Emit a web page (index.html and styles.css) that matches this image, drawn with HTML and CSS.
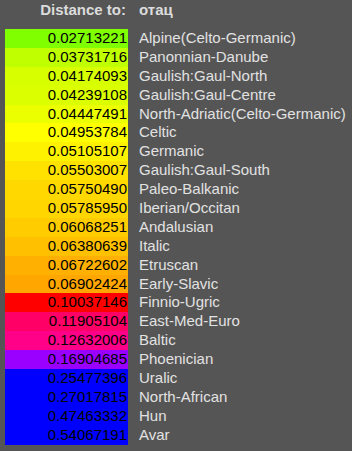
FILE: index.html
```html
<!DOCTYPE html>
<html>
<head>
<meta charset="utf-8">
<link rel="stylesheet" href="styles.css">
</head>
<body>
<div class="panel">
  <div class="head">
    <div class="head-key">Distance to:</div>
    <div class="head-name">отац</div>
  </div>
  <div class="rows">
    <div class="row"><div class="val c1">0.02713221</div><div class="name">Alpine(Celto-Germanic)</div></div>
    <div class="row"><div class="val c2">0.03731716</div><div class="name">Panonnian-Danube</div></div>
    <div class="row"><div class="val c3">0.04174093</div><div class="name">Gaulish:Gaul-North</div></div>
    <div class="row"><div class="val c4">0.04239108</div><div class="name">Gaulish:Gaul-Centre</div></div>
    <div class="row"><div class="val c5">0.04447491</div><div class="name">North-Adriatic(Celto-Germanic)</div></div>
    <div class="row"><div class="val c6">0.04953784</div><div class="name">Celtic</div></div>
    <div class="row"><div class="val c7">0.05105107</div><div class="name">Germanic</div></div>
    <div class="row"><div class="val c8">0.05503007</div><div class="name">Gaulish:Gaul-South</div></div>
    <div class="row"><div class="val c9">0.05750490</div><div class="name">Paleo-Balkanic</div></div>
    <div class="row"><div class="val c10">0.05785950</div><div class="name">Iberian/Occitan</div></div>
    <div class="row"><div class="val c11">0.06068251</div><div class="name">Andalusian</div></div>
    <div class="row"><div class="val c12">0.06380639</div><div class="name">Italic</div></div>
    <div class="row"><div class="val c13">0.06722602</div><div class="name">Etruscan</div></div>
    <div class="row"><div class="val c14">0.06902424</div><div class="name">Early-Slavic</div></div>
    <div class="row"><div class="val c15">0.10037146</div><div class="name">Finnio-Ugric</div></div>
    <div class="row"><div class="val c16">0.11905104</div><div class="name">East-Med-Euro</div></div>
    <div class="row"><div class="val c17">0.12632006</div><div class="name">Baltic</div></div>
    <div class="row"><div class="val c18">0.16904685</div><div class="name">Phoenician</div></div>
    <div class="row"><div class="val c19">0.25477396</div><div class="name">Uralic</div></div>
    <div class="row"><div class="val c19">0.27017815</div><div class="name">North-African</div></div>
    <div class="row"><div class="val c19">0.47463332</div><div class="name">Hun</div></div>
    <div class="row"><div class="val c19">0.54067191</div><div class="name">Avar</div></div>
  </div>
</div>
</body>
</html>
```

FILE: styles.css
```css
html, body {
  margin: 0;
  padding: 0;
  background: #555555;
}
body {
  width: 352px;
  height: 451px;
  overflow: hidden;
  font-family: "Liberation Sans", Arial, sans-serif;
  font-size: 15px;
}
.panel {
  padding-left: 5px;
}
.head {
  display: flex;
  height: 19px;
  line-height: 19px;
  margin-bottom: 10px;
  font-weight: bold;
  color: #dcdcdc;
}
.head-key {
  width: 121px;
  padding-right: 2px;
  text-align: right;
}
.head-name {
  padding-left: 11px;
}
.rows {
  display: flex;
  flex-direction: column;
}
.row {
  display: flex;
  height: 18.9px;
  line-height: 18.9px;
}
.val {
  width: 122px;
  padding-right: 1px;
  text-align: right;
  color: #000;
}
.name {
  padding-left: 11px;
  color: #e2e2e2;
  white-space: nowrap;
}
.c1 { background: #80ff00; }
.c2 { background: #c0ff00; }
.c3 { background: #d8ff00; }
.c4 { background: #dcff00; }
.c5 { background: #ecff00; }
.c6 { background: #ffff00; }
.c7 { background: #fff200; }
.c8 { background: #ffe200; }
.c9 { background: #ffd800; }
.c10 { background: #ffd600; }
.c11 { background: #ffcc00; }
.c12 { background: #ffc000; }
.c13 { background: #ffb000; }
.c14 { background: #ffa600; }
.c15 { background: #ff0000; }
.c16 { background: #ff0066; }
.c17 { background: #ff0088; }
.c18 { background: #9900ff; }
.c19 { background: #0000ff; }
```
